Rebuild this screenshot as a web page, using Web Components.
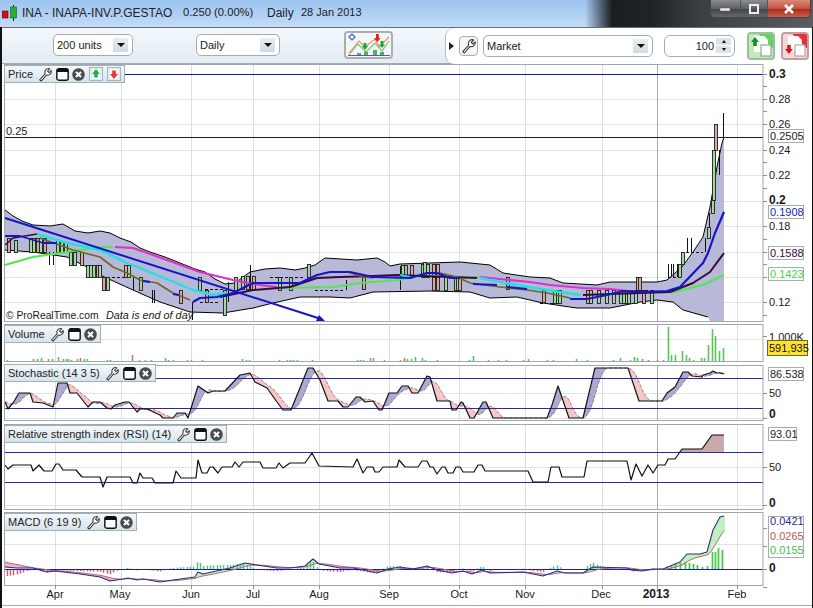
<!DOCTYPE html>
<html>
<head>
<meta charset="utf-8">
<title>INA - ProRealTime</title>
<style>
    html, body { margin: 0; padding: 0; background: #fff; overflow: hidden; }
    body { font-family: 'Liberation Sans', Arial, sans-serif; }
</style>
</head>
<body>
<prt-window>
    <prt-titlebar slot="title" text="INA - INAPA-INV.P.GESTAO" quote="0.250 (0.00%)" period="Daily" date="28 Jan 2013"></prt-titlebar>
    <prt-toolbar slot="tools"></prt-toolbar>
    <prt-pane name="price" top="64" rows="259" label="Price" arrows tag-top="1"></prt-pane>
    <prt-pane name="volume" top="323" rows="40" label="Volume" tag-top="2"></prt-pane>
    <prt-pane name="stochastic" top="363" rows="59" label="Stochastic (14 3 5)" tag-top="1"></prt-pane>
    <prt-pane name="rsi" top="422" rows="89" label="Relative strength index (RSI) (14)" tag-top="3"></prt-pane>
    <prt-pane name="macd" top="511" rows="92" label="MACD (6 19 9)" tag-top="2"></prt-pane>
</prt-window>

<script>
const WRENCH = `<path d="M1.8 13.6 7.6 7.4C6.6 4.4 8.4 1.4 11.6 1.6L12.6 2 10.2 4.4 11.8 6 14.2 3.8C14.8 7 12.2 9.4 9 8.6L3.4 15Z" fill="#fff" stroke="#3a3a3a" stroke-width="1.1" stroke-linejoin="round"/>`;

// x of the monthly grid lines, shared by all panes
const GRID_X = [55, 121, 191, 253, 319, 389, 459, 525, 602, 737];
const YEAR_X = 657;
const PLOT_LEFT = 4.5, PLOT_RIGHT = 763;

/* ---------- svg helpers ---------- */
function line(x1, y1, x2, y2, color, w = 1, extra = '') {
    return `<line x1="${x1}" y1="${y1}" x2="${x2}" y2="${y2}" stroke="${color}" stroke-width="${w}" ${extra}/>`;
}
function poly(pts, color, w = 1, extra = '') {
    return `<polyline points="${pts.map(p => p.join(',')).join(' ')}" fill="none" stroke="${color}" stroke-width="${w}" stroke-linejoin="round" ${extra}/>`;
}
function label(x, y, str, opts = {}) {
    const weight = opts.bold ? 'font-weight="bold"' : '';
    const size = opts.size || 11;
    const anchor = opts.anchor || 'start';
    return `<text x="${x}" y="${y + size * 0.36}" font-size="${size}" fill="${opts.fill || '#1a1a1a'}" text-anchor="${anchor}" ${weight} ${opts.italic ? 'font-style="italic"' : ''}>${str}</text>`;
}
function boxed(x, y, w, str, fill) {
    return `<rect x="${x + 0.5}" y="${y - 6.5}" width="${w}" height="13" fill="#fff" stroke="#a6aeb4"/>` + label(x + 2, y, str, { fill });
}
function axisTicks(ys) {
    return ys.map(y => line(PLOT_RIGHT, y + 0.5, PLOT_RIGHT + 4, y + 0.5, '#8a9296')).join('');
}
function frame(y1, y2, hLines = []) {
    let s = `<rect x="${PLOT_LEFT}" y="${y1 + 0.5}" width="${PLOT_RIGHT - PLOT_LEFT}" height="${y2 - y1}" fill="#fff"/>`;
    hLines.forEach(y => { s += line(PLOT_LEFT, y + 0.5, PLOT_RIGHT, y + 0.5, '#e2e4e4'); });
    GRID_X.forEach(x => { s += line(x + 0.5, y1, x + 0.5, y2, '#dcdee0'); });
    s += line(YEAR_X + 0.5, y1, YEAR_X + 0.5, y2, '#a6aaae');
    return s;
}
function frameEdge(y1, y2) {
    return `<rect x="${PLOT_LEFT}" y="${y1 + 0.5}" width="${PLOT_RIGHT - PLOT_LEFT}" height="${y2 - y1}" fill="none" stroke="#a0a8ac"/>`;
}
// value of a polyline at a given x
function sample(pts, x) {
    if (x <= pts[0][0]) return pts[0][1];
    for (let i = 1; i < pts.length; i++) {
        if (x <= pts[i][0]) {
            const [x0, y0] = pts[i - 1], [x1, y1] = pts[i];
            return y0 + (y1 - y0) * (x - x0) / (x1 - x0 || 1);
        }
    }
    return pts[pts.length - 1][1];
}

/* ---------- pane drawings (screen coordinates) ---------- */
const UPPER = [[5,210],[13,216],[22,221],[33,225],[50,226],[63,224],[75,231],[88,233],[100,231],[110,233],[120,238],[131,242],[140,248],[150,252],[165,257],[180,263],[195,269],[205,272],[215,279],[225,284],[235,283],[250,272],[265,269],[280,268],[295,270],[305,268],[315,265],[325,258],[357,260],[377,258],[385,262],[390,266],[400,264],[430,263],[460,262],[490,265],[503,273],[530,277],[550,278],[563,283],[597,285],[610,282],[657,282],[667,280],[682,267],[693,252],[703,237],[710,207],[717,167],[722,143],[724,137]];
const LOWER = [[724,321],[710,321],[708,317],[683,310],[673,302],[657,300],[640,302],[610,308],[577,308],[563,306],[543,303],[517,297],[490,298],[470,292],[430,291],[373,292],[350,298],[330,297],[300,297],[273,303],[253,308],[223,313],[190,312],[160,302],[133,290],[100,275],[87,267],[67,257],[33,252],[5,250]];

// x, top, bottom, g(reen) or p(ink)
const CANDLES = [[8,238,252,'p'],[15,240,252,'g'],[30,238,252,'g'],[33,238,252,'g'],[37,238,252,'p'],[40,238,252,'g'],[44,238,252,'p'],[57,240,252,'g'],[61,242,252,'g'],[65,242,252,'g'],[70,252,265,'g'],[74,252,265,'g'],[81,252,265,'p'],[87,265,277,'g'],[90,265,277,'g'],[93,265,277,'g'],[97,265,277,'p'],[99,265,277,'g'],[103,277,290,'p'],[107,277,290,'g'],[125,265,277,'p'],[128,265,277,'g'],[140,277,290,'g'],[180,290,303,'p'],[199,277,290,'g'],[206,290,302,'p'],[224,290,315,'g'],[235,277,290,'g'],[242,276,289,'g'],[247,276,289,'g'],[253,276,289,'p'],[279,277,290,'g'],[290,277,290,'g'],[308,264,277,'g'],[363,277,289,'p'],[402,265,277,'g'],[405,265,277,'p'],[411,265,277,'p'],[422,264,277,'g'],[424,262,277,'g'],[427,264,277,'g'],[433,264,277,'p'],[437,264,277,'p'],[433,277,290,'p'],[437,277,290,'p'],[445,277,290,'g'],[455,277,290,'g'],[457,277,290,'g'],[459,277,290,'p'],[507,277,289,'p'],[543,290,302,'p'],[554,290,303,'g'],[557,290,303,'g'],[559,290,303,'g'],[587,290,303,'p'],[590,290,303,'g'],[598,290,303,'g'],[606,290,303,'g'],[613,290,303,'g'],[620,290,303,'g'],[623,290,303,'g'],[626,290,303,'g'],[628,290,303,'g'],[635,290,303,'g'],[637,277,290,'p'],[639,277,290,'p'],[643,290,303,'p'],[651,290,303,'g'],[679,264,277,'g'],[682,252,264,'g'],[708,227,238,'g'],[712,200,213,'g'],[713,150,200,'g'],[715,124,150,'p']];
const STICKS = [[49,252,265],[53,252,265],[133,277,290],[152,290,303],[154,290,303],[192,302,320],[228,282,302],[250,265,290],[346,280,290],[400,266,290],[668,264,277],[671,264,277],[673,264,277],[677,264,277],[687,238,252],[691,238,252],[705,238,252],[709,213,227],[719,150,175],[723,113,138]];
const DASHES = [[107,125,277],[200,220,302],[205,225,289],[270,305,277],[620,655,290],[686,703,252],[668,678,277],[540,556,303],[315,345,290]];

const PANES = {
    price() {
        const hl = [99, 124, 150, 175, 201, 226, 252, 277, 302];
        let s = frame(64, 321, hl);
        s += line(PLOT_LEFT, 74.5, PLOT_RIGHT, 74.5, '#1616b0');
        s += label(6, 131, '0.25');
        s += `<polygon points="${UPPER.concat(LOWER).map(p => p.join(',')).join(' ')}" fill="#b8b8d8"/>`;
        s += poly(UPPER, '#000', 1) + poly(LOWER.slice(2), '#000', 1);
        s += line(PLOT_LEFT, 137.5, PLOT_RIGHT, 137.5, '#15156e');
        s += STICKS.map(c => line(c[0] + 0.5, c[1], c[0] + 0.5, c[2], '#111')).join('');
        s += DASHES.map(d => line(d[0], d[2] + 0.5, d[1], d[2] + 0.5, '#111', 1, 'stroke-dasharray="3 2"')).join('');
        s += CANDLES.map(c => `<rect x="${c[0] - 0.5}" y="${c[1] + 0.5}" width="3" height="${c[2] - c[1]}" fill="${c[3] === 'g' ? '#a4d8a0' : '#e0a4a4'}" stroke="#1a241a" stroke-width="0.9"/>`).join('');
        // moving averages, they change colour along the way
        s += poly([[5,265],[33,257],[67,252],[100,247],[113,247]], '#50e850', 2);
        s += poly([[115,247],[133,248],[167,260],[200,272],[233,280],[260,285],[277,287]], '#e030c8', 2);
        s += poly([[277,288],[333,287],[360,283],[397,280],[423,276],[443,276],[463,277],[480,277]], '#50e850', 2);
        s += poly([[480,277],[530,282],[550,285],[583,288],[610,289],[637,292]], '#e030c8', 2.2);
        s += poly([[670,293],[703,285],[713,280],[724,275]], '#50e850', 2.2);
        s += poly([[5,245],[13,238],[37,234]], '#3a0a3a', 1.6);
        s += poly([[220,297],[253,290],[290,287],[317,278],[340,277],[373,276],[397,275],[423,276],[477,278]], '#3a0a3a', 2);
        s += poly([[583,295],[640,293],[670,292],[693,283],[710,272],[724,253]], '#3a0a3a', 2);
        s += poly([[37,234],[67,243],[100,250],[127,263],[157,275],[193,290],[213,295],[227,293]], '#20e0e8', 2.4);
        s += poly([[400,275],[410,277]], '#20e0e8', 2);
        s += poly([[480,278],[517,285],[547,290],[580,295]], '#20e0e8', 2.4);
        s += poly([[40,238],[73,250],[100,257],[113,267],[127,273],[140,280],[157,283],[173,293],[190,300]], '#6b6b20', 1.6);
        s += poly([[348,272],[363,277],[373,278]], '#6b6b20', 1.6);
        s += poly([[440,273],[457,277],[470,283],[500,287],[527,290],[547,293],[570,298]], '#6b6b20', 1.6);
        s += poly([[5,236],[20,236],[43,243],[57,243]], '#1616c8', 1.8);
        s += poly([[143,281],[150,282]], '#1616c8', 1.8);
        s += poly([[173,294],[179,295]], '#1616c8', 1.8);
        s += poly([[193,302],[200,298],[217,297],[233,293],[253,283],[277,283],[300,283],[317,275],[330,272],[350,272],[373,277],[410,278],[427,273],[437,273],[450,278],[460,278]], '#1616c8', 2.2);
        s += poly([[473,284],[497,285]], '#1616c8', 2);
        s += poly([[507,287],[527,289]], '#1616c8', 2);
        s += poly([[570,299],[587,299],[607,295],[623,291],[640,292],[667,291],[680,287],[703,263],[708,253],[715,233],[724,212]], '#1616c8', 2.2);
        // trend line with its arrow
        s += line(5, 218, 318, 318, '#1414c8', 2);
        s += `<polygon points="325,321 316,321 319,315" fill="#1414c8"/>`;
        s += frameEdge(64, 321);
        s += `<text x="6" y="319" font-size="10.3" fill="#1a1a1a">© ProRealTime.com</text><text x="106" y="319" font-size="10.8" font-style="italic" fill="#1a1a1a">Data is end of day</text>`;
        s += axisTicks([74, 86, 99, 111, 124, 150, 162, 175, 188, 201, 226, 239, 252, 264, 277, 302, 315]);
        [[0.28, 99], [0.26, 124], [0.24, 150], [0.22, 175], [0.18, 226], [0.12, 302]].forEach(t => { s += label(769, t[1], t[0].toFixed(2)); });
        s += label(769, 74, '0.3', { bold: true, size: 12 }) + label(769, 200, '0.2', { bold: true, size: 12 });
        s += boxed(768, 136, 35, '0.2505', '#222');
        s += boxed(768, 212, 35, '0.1908', '#1c1cc0');
        s += boxed(768, 253, 35, '0.1588', '#3a0a3a');
        s += boxed(768, 274, 35, '0.1423', '#3cd83c');
        return s;
    },

    volume() {
        const green = [[7,360],[37,359],[41,358],[48,359],[58,357],[63,359],[66,359],[68,359],[71,360],[84,359],[87,359],[107,360],[110,360],[139,360],[145,360],[151,360],[165,358],[168,360],[173,360],[187,360],[191,360],[202,360],[242,359],[246,360],[249,360],[279,360],[287,360],[290,360],[293,360],[297,360],[312,360],[357,360],[360,360],[363,360],[370,358],[384,360],[400,360],[407,359],[411,359],[415,357],[422,358],[425,360],[469,360],[473,356],[488,360],[498,360],[506,360],[523,360],[528,359],[547,360],[553,360],[576,359],[587,360],[613,360],[620,358],[630,360],[634,357],[637,358],[663,360],[668,327],[671,355],[675,355],[682,351],[686,355],[689,358],[693,360],[701,358],[704,358],[708,345],[712,329],[715,336],[719,351],[723,348]];
        const pink = [[33,359],[52,359],[77,359],[80,358],[132,355],[373,358],[404,358],[437,360],[642,359],[648,360],[657,360]];
        let s = frame(324, 361, [339]);
        green.forEach(b => { s += line(b[0] + 0.5, b[1], b[0] + 0.5, 361, '#58c458', 1.6); });
        pink.forEach(b => { s += line(b[0] + 0.5, b[1], b[0] + 0.5, 361, '#c87878', 1.6); });
        s += frameEdge(324, 361);
        s += axisTicks([336]);
        s += label(769, 337, '1,000K');
        s += `<rect x="767.5" y="340.5" width="40" height="15" fill="#ffe22a" stroke="#6a6a20"/>` + label(769, 348, '591,935', { fill: '#111', size: 11 });
        return s;
    },

    stochastic() {
        const K = [[5,402],[8,409],[13,403],[19,393],[30,393],[33,402],[43,403],[53,407],[58,383],[67,383],[70,393],[77,393],[88,407],[93,402],[100,402],[107,408],[111,409],[115,405],[125,402],[129,402],[137,412],[140,409],[147,409],[160,415],[163,418],[173,418],[177,413],[185,413],[188,418],[198,386],[208,393],[213,391],[225,391],[240,375],[250,373],[255,382],[267,388],[277,402],[283,410],[291,410],[308,368],[313,368],[320,380],[328,401],[338,401],[343,407],[348,407],[356,397],[360,397],[365,402],[373,401],[379,410],[382,410],[389,393],[397,393],[402,386],[408,386],[412,393],[418,393],[427,376],[430,377],[437,401],[450,401],[452,410],[456,410],[461,402],[463,403],[470,418],[474,418],[483,402],[486,402],[493,418],[547,418],[552,405],[558,386],[569,418],[583,418],[595,368],[628,368],[633,383],[639,401],[662,401],[667,393],[675,387],[683,372],[688,372],[692,376],[702,377],[703,375],[710,373],[713,371],[717,373],[720,373],[724,374]];
        let s = frame(365, 420, [393, 418]);
        const D = [];
        for (let x = 5; x <= 724; x++) {
            let sum = 0;
            for (let i = 0; i < 14; i++) sum += sample(K, x - i);
            const d = sum / 14, k = sample(K, x);
            D.push([x, +d.toFixed(1)]);
            if (Math.abs(d - k) > 0.3) {
                s += `<rect x="${x}" y="${Math.min(d, k).toFixed(1)}" width="1" height="${Math.abs(d - k).toFixed(1)}" fill="${k < d ? '#aaaad2' : '#f4c8c8'}"/>`;
            }
        }
        s += poly(D, '#b07878', 1, 'stroke-dasharray="3 2"');
        s += line(PLOT_LEFT, 378.5, PLOT_RIGHT, 378.5, '#2a2a9c', 1);
        s += line(PLOT_LEFT, 408.5, PLOT_RIGHT, 408.5, '#2a2a9c', 1);
        s += poly(K, '#111', 1.2);
        s += frameEdge(365, 420);
        s += axisTicks([393, 418]);
        s += boxed(768, 374, 35, '86.538', '#222');
        s += label(769, 393, '50') + label(769, 414, '0', { bold: true, size: 12 });
        return s;
    },

    rsi() {
        const R = [[5,465],[8,469],[13,465],[31,465],[33,471],[39,465],[44,471],[52,471],[56,464],[59,464],[63,470],[76,470],[82,477],[100,477],[103,487],[107,477],[130,477],[133,483],[137,483],[140,473],[143,478],[152,478],[155,483],[173,483],[176,471],[181,478],[196,478],[198,460],[202,473],[207,473],[210,467],[213,467],[218,473],[222,467],[232,467],[235,462],[239,467],[243,462],[260,462],[263,468],[276,468],[279,463],[283,468],[290,463],[305,463],[312,453],[319,466],[353,467],[357,459],[363,473],[367,467],[373,467],[375,472],[379,472],[383,467],[397,467],[399,460],[405,467],[418,467],[422,461],[427,461],[430,467],[433,467],[437,474],[442,467],[445,467],[448,473],[453,473],[456,467],[460,467],[463,472],[474,472],[478,465],[482,465],[485,471],[528,471],[533,482],[548,482],[551,467],[559,467],[562,477],[584,477],[587,461],[627,461],[631,480],[636,464],[642,476],[648,465],[653,473],[658,465],[665,465],[668,459],[675,459],[682,449],[702,449],[712,435],[717,435],[724,435]];
        let s = frame(424, 509, [467, 505]);
        s += `<polygon points="680,452 682,449 702,449 712,435 717,435 724,435 724,452" fill="#c8aaaa"/>`;
        s += line(PLOT_LEFT, 452.5, PLOT_RIGHT, 452.5, '#2a2a9c', 1);
        s += line(PLOT_LEFT, 482.5, PLOT_RIGHT, 482.5, '#2a2a9c', 1);
        s += poly(R, '#111', 1.2);
        s += frameEdge(424, 509);
        s += axisTicks([467, 505]);
        s += boxed(768, 434, 28, '93.01', '#222');
        s += label(769, 467, '50') + label(769, 503, '0', { bold: true, size: 12 });
        return s;
    },

    macd() {
        const M = [[5,567],[17,568],[33,568],[47,572],[55,571],[80,574],[100,577],[110,581],[123,579],[128,578],[137,580],[143,579],[160,582],[173,580],[195,577],[198,572],[203,574],[230,568],[245,563],[263,566],[277,568],[290,568],[305,566],[313,559],[319,564],[340,568],[353,568],[363,570],[377,573],[388,569],[400,567],[413,569],[427,566],[437,570],[452,573],[463,571],[472,574],[482,570],[490,573],[523,572],[543,576],[557,571],[565,573],[583,573],[593,567],[627,568],[632,570],[642,571],[653,569],[663,569],[680,562],[687,554],[700,554],[707,552],[713,530],[720,517],[724,516]];
        let s = frame(512, 585, [544]);
        let ema = 562;
        const sig = [];
        for (let x = 5; x <= 724; x++) {
            const m = sample(M, x);
            if (x > 35) ema += (m - ema) * 0.08; else ema += 0.2;
            sig.push([x, +ema.toFixed(1)]);
            if (Math.abs(ema - m) > 0.3) {
                s += `<rect x="${x}" y="${Math.min(ema, m).toFixed(1)}" width="1" height="${Math.abs(ema - m).toFixed(1)}" fill="${m < ema ? '#bff0c0' : '#f2b4b8'}"/>`;
            }
            if (x % 10 === 7 || x % 10 === 0 || x % 10 === 3) {
                if (x < 668) {
                    const h = Math.max(-7, Math.min(7, (ema - m) * 1.6));
                    if (Math.abs(h) > 0.4) s += line(x + 0.5, 569, x + 0.5, (569 - h).toFixed(1), h > 0 ? '#58c878' : '#c06070', 1.5);
                }
            }
        }
        [[671,566],[675,564],[680,563],[685,562],[689,563],[693,564],[697,565],[702,567],[707,566],[712,552],[715,552],[718,548],[722,550]].forEach(b => {
            s += line(b[0] + 0.5, b[1], b[0] + 0.5, 569, '#4cc84c', 1.8);
        });
        s += line(PLOT_LEFT, 569.5, PLOT_RIGHT, 569.5, '#1c1cb0', 1);
        s += poly(sig, '#b87060', 1);
        s += poly(M, '#2a2a9c', 1.1);
        s += frameEdge(512, 585);
        s += axisTicks([528, 546, 569, 587]);
        s += `<rect x="768.5" y="516.5" width="35" height="41" fill="#fff" stroke="#a6aeb4"/>`;
        s += label(770, 521, '0.0421', { fill: '#2a2a9c' }) + label(770, 536, '0.0265', { fill: '#b85c5c' }) + label(770, 550, '0.0155', { fill: '#48c048' });
        s += label(769, 568, '0', { bold: true, size: 12 });
        GRID_X.concat(YEAR_X).forEach(x => { s += line(x + 0.5, 585, x + 0.5, 589, '#8a9296'); });
        [['Apr', 55], ['May', 120], ['Jun', 191], ['Jul', 253], ['Aug', 319], ['Sep', 389], ['Oct', 459], ['Nov', 525], ['Dec', 601], ['Feb', 737]].forEach(t => {
            s += label(t[1], 594, t[0], { anchor: 'middle' });
        });
        s += label(656, 594, '2013', { anchor: 'middle', bold: true, size: 12 });
        return s;
    }
};

/* ---------- components ---------- */

/** Outer window: dark frame on the left and the right, everything stacked in flow */
class PrtWindow extends HTMLElement {
    constructor() {
        super();
        this.attachShadow({ mode: 'open' }).innerHTML = `
            <style>
                :host { display: block; position: relative; width: 813px; height: 608px; overflow: hidden; background: #fff; }
                .wrap { display: flex; flex-direction: column; height: 100%; }
                .edge { position: absolute; top: 27px; bottom: 0; left: 0; width: 2px; background: #111; }
                .edge.r { left: auto; right: 0; width: 1px; }
                .foot { position: absolute; left: 0; right: 0; bottom: 2px; height: 1px; background: #a4acb0; }
            </style>
            <div class="wrap">
                <slot name="title"></slot>
                <slot name="tools"></slot>
                <slot></slot>
            </div>
            <div class="foot"></div>
            <div class="edge"></div><div class="edge r"></div>`;
    }
}

class PrtTitlebar extends HTMLElement {
    connectedCallback() {
        const a = n => this.getAttribute(n);
        this.attachShadow({ mode: 'open' }).innerHTML = `
            <style>
                :host {
                    display: flex; align-items: flex-start; height: 27px; flex: none;
                    font: 12px 'Liberation Sans', Arial, sans-serif; color: #222;
                    background:
                        linear-gradient(90deg, transparent 0, transparent 585px, #1a1e22 612px, #202326 650px, #3c3f42 700px, #5a5c60 813px),
                        linear-gradient(180deg, #9cc4ee 0, #aed0f4 50%, #c2dcf8 100%);
                }
                .logo { margin: 4px 3px 0 2px; flex: none; }
                .txt { margin-top: 6px; white-space: pre; }
                .btns {
                    margin-left: auto; margin-right: 2px; display: flex; height: 18px; width: 101px;
                    border: 1px solid #40454a; border-top: 0; border-radius: 0 0 5px 5px; overflow: hidden; box-sizing: border-box;
                }
                .btns div { display: flex; align-items: center; justify-content: center; border-right: 1px solid #50555a; }
                .mn, .mx { background: linear-gradient(180deg, #8a8e92 0, #5e6266 50%, #3e4246 52%, #66696c 100%); }
                .mn { width: 29px; } .mx { width: 26px; }
                .cl { flex: 1; border: 0 !important; background: linear-gradient(180deg, #d88a78 0, #c4523e 50%, #a82c1c 55%, #c86048 100%); }
            </style>
            <svg class="logo" width="17" height="18" viewBox="0 0 17 18">
                <rect x="0" y="7" width="6" height="7" fill="#d81010" stroke="#600" stroke-width=".6"/>
                <path d="M11.5 1V17" stroke="#223" stroke-width="1"/>
                <rect x="8.5" y="3" width="6" height="11" fill="#28b028" stroke="#064" stroke-width=".6"/>
            </svg>
            <span class="txt" style="width:161px;flex:none">${a('text')}</span>
            <span class="txt" style="font-size:11.2px;width:84px;flex:none">${a('quote')}</span>
            <span class="txt" style="width:34px;flex:none">${a('period')}</span>
            <span class="txt" style="font-size:11px">${a('date')}</span>
            <div class="btns">
                <div class="mn"><svg width="11" height="6"><rect x="0" y="2" width="10" height="3" fill="#eee" stroke="#555" stroke-width=".5"/></svg></div>
                <div class="mx"><svg width="11" height="10"><rect x="1" y="1" width="8" height="8" fill="none" stroke="#eee" stroke-width="2"/></svg></div>
                <div class="cl"><svg width="12" height="10"><path d="M2 1 10 9M10 1 2 9" stroke="#fff" stroke-width="2.6"/></svg></div>
            </div>`;
    }
}

/** Rounded drop-down with a value and a small arrow button */
class PrtSelect extends HTMLElement {
    connectedCallback() {
        this.attachShadow({ mode: 'open' }).innerHTML = `
            <style>
                :host {
                    display: flex; align-items: center; box-sizing: border-box; height: 22px; flex: none;
                    background: #fff; border: 1px solid #a4acb2; border-radius: 5px;
                    font: 11px 'Liberation Sans', Arial, sans-serif; color: #222; padding: 0 2px 0 3px;
                    width: var(--w, 80px);
                }
                span { flex: 1; white-space: nowrap; }
                i {
                    width: 15px; height: 14px; display: flex; align-items: center; justify-content: center;
                    background: linear-gradient(180deg, #e6eef2, #cfdce4); margin-right: 2px;
                }
                i::after { content: ''; border: 4px solid transparent; border-top: 4px solid #111; border-bottom: 0; }
            </style>
            <span>${this.getAttribute('value')}</span><i></i>`;
    }
}

class PrtSpin extends HTMLElement {
    connectedCallback() {
        this.attachShadow({ mode: 'open' }).innerHTML = `
            <style>
                :host {
                    display: flex; align-items: center; box-sizing: border-box; height: 22px; width: 71px; flex: none;
                    background: #fff; border: 1px solid #a4acb2; border-radius: 6px;
                    font: 11px 'Liberation Sans', Arial, sans-serif; color: #222; padding-right: 3px;
                }
                span { flex: 1; text-align: right; padding-right: 2px; }
                .s { width: 15px; display: flex; flex-direction: column; gap: 1px; }
                .s b { height: 7px; background: #dae4ea; display: flex; align-items: center; justify-content: center; }
                .s b:first-child::after { content: ''; border: 2px solid transparent; border-bottom: 3px solid #111; border-top: 0; }
                .s b:last-child::after { content: ''; border: 2px solid transparent; border-top: 3px solid #111; border-bottom: 0; }
            </style>
            <span>${this.getAttribute('value')}</span><div class="s"><b></b><b></b></div>`;
    }
}

class PrtToolbar extends HTMLElement {
    connectedCallback() {
        this.attachShadow({ mode: 'open' }).innerHTML = `
            <style>
                :host {
                    display: flex; height: 37px; flex: none; box-sizing: border-box;
                    border-top: 1px solid #6a7074; border-bottom: 1px solid #a4acb0;
                    background: linear-gradient(180deg, #f4f8fc 0, #e2ecf2 100%);
                }
                .left { display: flex; align-items: center; width: 445px; flex: none; padding: 0 0 1px 53px; box-sizing: border-box; }
                .right {
                    flex: 1; display: flex; align-items: center; background: #fff; padding-bottom: 1px;
                    border-left: 1px solid #b4bcc2; border-radius: 9px 0 0 9px; margin-bottom: -1px;
                }
                .btn {
                    box-sizing: border-box; background: #f4f6f6; border: 1px solid #a8b0a8; border-radius: 4px; flex: none;
                    display: flex; align-items: center; justify-content: center;
                }
                .go { border-left: 5px solid #222; border-top: 4px solid transparent; border-bottom: 4px solid transparent; margin: 0 5px 0 3px; }
                svg { display: block; }
            </style>
            <div class="left">
                <prt-select value="200 units" style="--w:80px"></prt-select>
                <prt-select value="Daily" style="--w:84px;margin-left:63px"></prt-select>
                <div class="btn" style="width:49px;height:28px;margin-left:64px;border-width:2px;border-color:#a8b0b4">
                    <svg width="44" height="24" viewBox="0 0 44 24">
                        <path d="M2 20 12 8 18 14 28 6 32 14 42 4" fill="none" stroke="#e08a70" stroke-width="1.1"/>
                        <path d="M2 22 11 11 19 19 28 10 35 18 42 8" fill="none" stroke="#72c062" stroke-width="1.1"/>
                        <path d="M1 22.5H43" stroke="#8e3aa8" stroke-width="1"/>
                        <path d="M10 22V20H14V22ZM17 22V19H21V22ZM26 22V17H30V22ZM33 22V19H37V22Z" fill="#30c060"/>
                        <path d="M2 4 5 1 8 4 5 7Z" fill="#fff" stroke="#3a60c0" stroke-width="1.2"/>
                        <path d="M18 14 21 10H19.4V7H16.6V10H15Z M35 12 38 8.5H36.4V5H33.6V8.5H32Z" fill="#18a838" transform="translate(0 3)"/>
                        <path d="M29 1H31.8V5H33.6L30.4 9 27.2 5H29Z" fill="#e02020"/>
                    </svg>
                </div>
            </div>
            <div class="right">
                <span class="go"></span>
                <div class="btn" style="width:19px;height:20px"><svg width="16" height="16" viewBox="0 0 16 16">${WRENCH}</svg></div>
                <prt-select value="Market" style="--w:170px;margin-left:5px"></prt-select>
                <prt-spin value="100" style="margin-left:11px"></prt-spin>
                <div class="btn" style="width:28px;height:28px;margin-left:12px;border:2px solid #9cc09c;background:linear-gradient(45deg,#c4e8bc 70%,#68d068 70%)">
                    <svg width="24" height="24" viewBox="0 0 24 24">
                        <path d="M5 2H15L19 6V18H5Z" fill="#fff"/><rect x="12" y="11" width="10" height="11" fill="#fff" stroke="#7a9a8a"/>
                        <path d="M6 3 10 8H7.8V12H4.2V8H2Z" fill="#0c9428"/>
                    </svg>
                </div>
                <div class="btn" style="width:28px;height:28px;margin-left:6px;border:2px solid #c89ca0;background:linear-gradient(45deg,#f4d8d8 70%,#e82c38 70%)">
                    <svg width="24" height="24" viewBox="0 0 24 24">
                        <path d="M5 2H15L19 6V18H5Z" fill="#fff"/><rect x="12" y="11" width="10" height="11" fill="#fff" stroke="#a89a9a"/>
                        <path d="M6 20 2 15H4.2V11H7.8V15H10Z" fill="#e01818"/>
                    </svg>
                </div>
            </div>`;
    }
}

/** The grey caption laid over the top left corner of a pane */
class PrtPaneTag extends HTMLElement {
    connectedCallback() {
        const arrows = this.hasAttribute('arrows') ? `
            <span class="arr"><svg width="14" height="14" viewBox="0 0 14 14"><rect x=".5" y=".5" width="13" height="13" fill="#dcf0f8" stroke="#a8b4bc"/><path d="M3 2H11V12H3Z" fill="#fff"/><path d="M7 2 11 7H8.8V10.5H5.2V7H3Z" fill="#24b040"/></svg></span>
            <span class="arr"><svg width="14" height="14" viewBox="0 0 14 14"><rect x=".5" y=".5" width="13" height="13" fill="#e4ecf2" stroke="#a8b4bc"/><path d="M3 2H11V12H3Z" fill="#fff"/><path d="M7 12 3 7H5.2V3.5H8.8V7H11Z" fill="#e83434"/></svg></span>` : '';
        this.attachShadow({ mode: 'open' }).innerHTML = `
            <style>
                :host {
                    display: flex; align-items: center; height: 18px; box-sizing: border-box; gap: 3px;
                    padding: 0 3px 0 3px; width: max-content;
                    font: 11px 'Liberation Sans', Arial, sans-serif; color: #222;
                    background: linear-gradient(180deg, #f4f8fa 0, #d6e4ec 100%);
                    border: 1px solid #a4b0b8;
                }
                span { white-space: nowrap; display: flex; }
                .lab { margin-right: 2px; }
                .arr { margin-left: 1px; }
                svg { display: block; }
            </style>
            <span class="lab">${this.getAttribute('label')}</span>
            <svg width="15" height="15" viewBox="0 0 16 16">${WRENCH}</svg>
            <svg width="13" height="13" viewBox="0 0 13 13"><rect x=".8" y=".8" width="11.4" height="11.4" rx="2" fill="#fff" stroke="#111" stroke-width="1.4"/><rect x="1" y="1" width="11" height="3" fill="#111"/></svg>
            <svg width="13" height="13" viewBox="0 0 13 13"><circle cx="6.5" cy="6.5" r="6.3" fill="#4c4c4c"/><path d="M4 4 9 9M9 4 4 9" stroke="#fff" stroke-width="2"/></svg>
            ${arrows}`;
    }
}

/** One chart pane: a free canvas in screenshot coordinates, with its caption on top */
class PrtPane extends HTMLElement {
    connectedCallback() {
        const top = +this.getAttribute('top'), rows = +this.getAttribute('rows');
        const arrows = this.hasAttribute('arrows') ? 'arrows' : '';
        const tagTop = this.getAttribute('tag-top') || 0;
        this.attachShadow({ mode: 'open' }).innerHTML = `
            <style>
                :host { display: block; position: relative; width: 813px; height: ${rows}px; flex: none; }
                svg { display: block; font-family: 'Liberation Sans', Arial, sans-serif; }
                prt-pane-tag { position: absolute; left: 4px; top: ${tagTop}px; }
            </style>
            <svg width="813" height="${rows}" viewBox="0 ${top} 813 ${rows}">${PANES[this.getAttribute('name')]()}</svg>
            <prt-pane-tag label="${this.getAttribute('label')}" ${arrows}></prt-pane-tag>`;
    }
}

customElements.define('prt-select', PrtSelect);
customElements.define('prt-spin', PrtSpin);
customElements.define('prt-pane-tag', PrtPaneTag);
customElements.define('prt-titlebar', PrtTitlebar);
customElements.define('prt-toolbar', PrtToolbar);
customElements.define('prt-pane', PrtPane);
customElements.define('prt-window', PrtWindow);
</script>
</body>
</html>
